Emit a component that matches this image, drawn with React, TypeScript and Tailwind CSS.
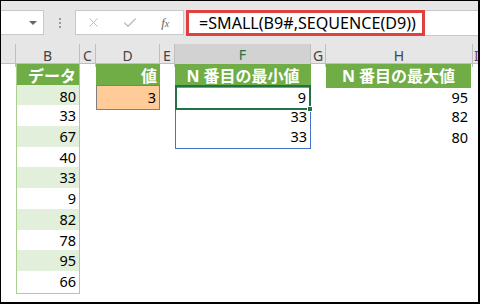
import { X, Check } from 'lucide-react';

const cols = 'grid grid-cols-[15px_64px_16px_64px_15px_136px_15px_147px_1fr]';

const letters = ['', 'B', 'C', 'D', 'E', 'F', 'G', 'H', 'I'];

const data = [80, 33, 67, 40, 33, 9, 82, 78, 95, 66];
const smallest = [9, 33, 33];
const largest = [95, 82, 80];

const num = 'flex items-center justify-end pr-[3px] text-[14.5px] text-black';
const head = 'flex items-center bg-[#70ad47] text-white font-bold text-[16px]';

export default function App() {
  return (
    <div
      className="w-[480px] h-[304px] overflow-hidden bg-white border border-black border-r-2 border-b-2"
      style={{ fontFamily: '"Noto Sans", "Noto Sans CJK JP", sans-serif' }}
    >
      {/* Formula bar */}
      <div className="h-[43px] bg-[#e6e6e6] flex items-start pt-[9px]">
        <div className="w-[43px] h-[25px] bg-white border border-l-0 border-[#c8c8c8] flex items-center justify-end pr-[6px]">
          <span className="w-0 h-0 border-x-[4px] border-x-transparent border-t-[4px] border-t-[#666]" />
        </div>
        <div className="w-[31px] h-[25px] flex flex-col items-center justify-center gap-[2px]">
          <span className="size-[2px] bg-[#9a9a9a]" />
          <span className="size-[2px] bg-[#9a9a9a]" />
          <span className="size-[2px] bg-[#9a9a9a]" />
        </div>
        <div className="w-[109px] h-[25px] bg-white border border-[#c8c8c8] flex items-center">
          <div className="w-[36px] flex justify-center">
            <X size={15} strokeWidth={1.6} color="#bdbdbd" />
          </div>
          <div className="w-[36px] flex justify-center">
            <Check size={16} strokeWidth={2} color="#bdbdbd" />
          </div>
          <div
            className="w-[36px] flex justify-center italic text-[13px] text-[#666]"
            style={{ fontFamily: '"Liberation Serif", serif' }}
          >
            f<span className="text-[10px] mt-[3px]">x</span>
          </div>
        </div>
        <div className="flex-1 h-[26px] ml-[3px] bg-white border-y border-[#c8c8c8] flex items-stretch">
          <div className="w-[239px] border-[3px] border-[#e0413f] flex items-center pl-[10px] text-[16.1px] text-black whitespace-nowrap -mt-[1px] -mb-[1px] -ml-[1px]">
            =SMALL(B9#,SEQUENCE(D9))
          </div>
        </div>
      </div>

      {/* Column headers */}
      <div className={`${cols} h-[20px] bg-[#e6e6e6] border-b border-[#bfbfbf] text-[14px] text-[#444]`}>
        {letters.map((l, i) => (
          <div
            key={i}
            className={
              l === 'F'
                ? 'flex items-center justify-center bg-[#d2d2d2] border-r border-[#bfbfbf] border-b-2 border-b-[#217346] text-[#217346]'
                : `flex items-center justify-center border-r border-[#bfbfbf] ${l === 'I' ? 'text-[#7a3a7a] justify-start pl-[1px]' : ''}`
            }
          >
            {l}
          </div>
        ))}
      </div>

      {/* Sheet */}
      <div className={`${cols} h-[20.7px]`}>
        <div />
        <div className={`${head} justify-end pr-[3px] border-x border-[#a9d08e]`}>データ</div>
        <div />
        <div className={`${head} justify-end pr-[3px]`}>値</div>
        <div />
        <div className={`${head} justify-center`}>N 番目の最小値</div>
        <div />
        <div className={`${head} justify-center mr-[2px]`}>N 番目の最大値</div>
        <div />
      </div>

      {data.map((v, r) => (
        <div key={r} className={`${cols} h-[20.7px]`}>
          <div />
          <div
            className={`${num} border-x border-b border-[#a9d08e] ${r % 2 === 0 ? 'bg-[#e2efda]' : 'bg-white'}`}
          >
            {v}
          </div>
          <div />
          {r === 0 ? (
            <div className={`${num} bg-[#ffcc99] border border-[#7f7f7f] text-[#3f3f76]`}>3</div>
          ) : (
            <div />
          )}
          <div />
          {r === 0 ? (
            <div className={`${num} relative z-10 border-2 border-[#217346] pr-[2px]`}>
              {smallest[0]}
              <span className="absolute -right-[4px] -bottom-[4px] size-[6px] bg-[#217346] border border-white" />
            </div>
          ) : r < 3 ? (
            <div className={`${num} border-x border-[#4472c4] ${r === 2 ? 'border-b' : ''}`}>
              {smallest[r]}
            </div>
          ) : (
            <div />
          )}
          <div />
          {r < 3 ? <div className={`${num} pr-[5px]`}>{largest[r]}</div> : <div />}
          <div />
        </div>
      ))}
    </div>
  );
}
